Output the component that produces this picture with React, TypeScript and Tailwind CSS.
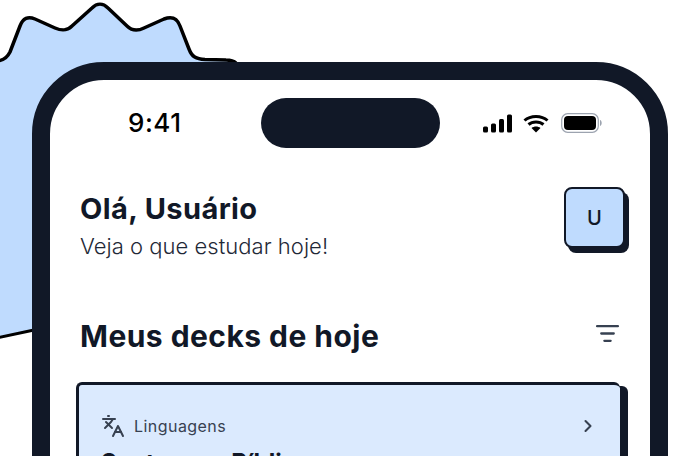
import { ChevronRight, Languages, ListFilter } from 'lucide-react';

const outline =
  'M-4 61 C3 61 7 58 10 52 L20 26 C23 18 28 16 35 19 L55 28 C62 31 67 31 72 26 L92 8 C97 3 103 3 108 8 L127 26 C132 31 138 31 144 28 L164 19 C172 16 177 18 180 26 L189 49 C192 57 196 59 205 59.500 L226 60 C232 60 234 61 236 63';

function Blob() {
  return (
    <svg className="absolute left-0 top-0" width="240" height="345" viewBox="0 0 240 345" fill="none">
      <path d={`${outline} L240 340 L32 330 L-4 338 Z`} fill="#BFDBFE" />
      <path d={outline} stroke="#000" strokeWidth="3.500" />
      <path d="M-4 338 L34 330" stroke="#000" strokeWidth="3" />
    </svg>
  );
}

function StatusIcons() {
  return (
    <div className="flex items-center">
      <svg width="30" height="19" viewBox="0 0 30 19" fill="#000">
        <rect x="0" y="12.500" width="5" height="6" rx="1.500" />
        <rect x="8" y="9.500" width="5" height="9" rx="1.500" />
        <rect x="16" y="5" width="5" height="13.500" rx="1.500" />
        <rect x="24" y="0.500" width="5" height="18" rx="1.500" />
      </svg>
      <svg className="ml-[10px]" width="26" height="19" viewBox="0 0 26 19" fill="none" stroke="#000" strokeWidth="3">
        <path d="M1.500 6.500 C7.500 1 18.500 1 24.500 6.500" />
        <path d="M5.500 10.500 C9.500 7 16.500 7 20.500 10.500" />
        <path d="M13 18.500 L8.500 14 C11 12 15 12 17.500 14 Z" fill="#000" stroke="none" />
      </svg>
      <svg className="ml-[12px]" width="42" height="20" viewBox="0 0 42 20" fill="none">
        <rect x="0.700" y="0.700" width="36.600" height="18.600" rx="6" stroke="#9CA3AF" strokeWidth="1.200" />
        <rect x="3" y="3" width="32" height="14" rx="4" fill="#000" />
        <path d="M39 7 C41 7.500 41.500 12 39 13 Z" fill="#9CA3AF" />
      </svg>
    </div>
  );
}

export default function App() {
  return (
    <div className="relative h-[456px] w-[700px] overflow-hidden bg-white font-['Inter',sans-serif]">
      <Blob />
      <div className="relative ml-[32px] mt-[62px] h-[500px] w-[636px] rounded-t-[72px] border-[18px] border-[#111827] bg-white">
        <div className="flex h-[68px] items-center pl-[78px] pr-[47px] pt-[18px]">
          <span className="w-[133px] text-[26px] font-medium leading-none tracking-[0.5px] text-black">9:41</span>
          <div className="h-[50px] w-[179px] rounded-full bg-[#111827]" />
          <div className="ml-auto">
            <StatusIcons />
          </div>
        </div>

        <div className="px-[26px]">
          <div className="mt-[39px] flex items-start justify-between pl-[4px]">
            <div className="pt-[4px]">
              <h1 className="text-[29px] font-bold leading-[36px] tracking-[0.4px] text-[#111827]">Olá, Usuário</h1>
              <p className="mt-[5px] text-[22px] font-light leading-[28px] tracking-[0.03px] text-[#1F2937]">Veja o que estudar hoje!</p>
            </div>
            <div className="mr-[-1px] flex h-[61px] w-[61px] items-center justify-center rounded-[8px] border-2 border-[#111827] bg-[#BFDBFE] text-[20px] font-medium text-[#111827] shadow-[4px_5px_0_0_#111827]">
              U
            </div>
          </div>

          <div className="mt-[56px] flex items-center justify-between pl-[4px] pr-[4px]">
            <h2 className="text-[30px] font-bold leading-[40px] tracking-[0.45px] text-[#111827]">Meus decks de hoje</h2>
            <ListFilter size={25} strokeWidth={2.200} className="mt-[-6px] text-[#374151]" />
          </div>

          <div className="mt-[26px] h-[200px] w-[544px] rounded-[6px] border-t-[3px] border-l-[3px] border-[#111827] bg-[#DBEAFE] pl-[22px] pr-[22px] pt-[29px] shadow-[8px_4px_0_0_#111827]">
            <div className="flex items-center justify-between">
              <div className="flex items-center gap-[9px] text-[#374151]">
                <Languages size={24} strokeWidth={2} />
                <span className="text-[16px] font-normal tracking-[0.45px]">Linguagens</span>
              </div>
              <ChevronRight size={20} strokeWidth={2.500} className="text-[#374151]" />
            </div>
            <p className="mt-[7px] text-[24px] font-bold text-[#111827]">Sentenças Bíblicas</p>
          </div>
        </div>
      </div>
    </div>
  );
}
